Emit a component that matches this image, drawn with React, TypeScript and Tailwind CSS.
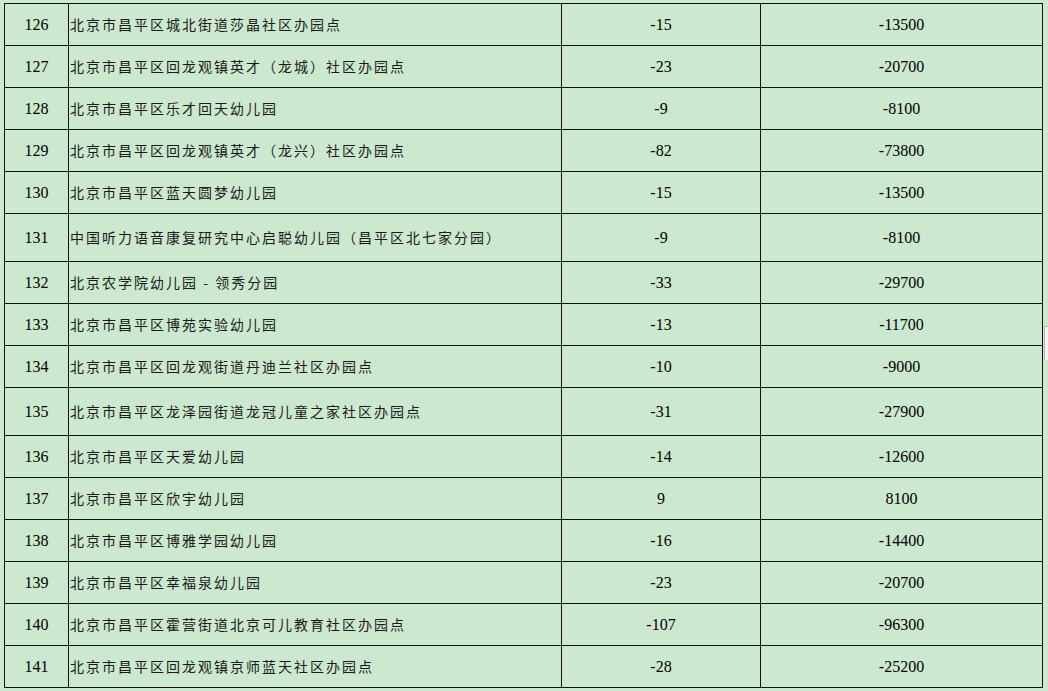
import React from "react";

type Row = { no: number; name: string; count: string; amount: string; tall?: boolean };

const ROWS: Row[] = [
  { no: 126, name: "北京市昌平区城北街道莎晶社区办园点", count: "-15", amount: "-13500" },
  { no: 127, name: "北京市昌平区回龙观镇英才（龙城）社区办园点", count: "-23", amount: "-20700" },
  { no: 128, name: "北京市昌平区乐才回天幼儿园", count: "-9", amount: "-8100" },
  { no: 129, name: "北京市昌平区回龙观镇英才（龙兴）社区办园点", count: "-82", amount: "-73800" },
  { no: 130, name: "北京市昌平区蓝天圆梦幼儿园", count: "-15", amount: "-13500" },
  { no: 131, name: "中国听力语音康复研究中心启聪幼儿园（昌平区北七家分园）", count: "-9", amount: "-8100", tall: true },
  { no: 132, name: "北京农学院幼儿园 - 领秀分园", count: "-33", amount: "-29700" },
  { no: 133, name: "北京市昌平区博苑实验幼儿园", count: "-13", amount: "-11700" },
  { no: 134, name: "北京市昌平区回龙观街道丹迪兰社区办园点", count: "-10", amount: "-9000" },
  { no: 135, name: "北京市昌平区龙泽园街道龙冠儿童之家社区办园点", count: "-31", amount: "-27900", tall: true },
  { no: 136, name: "北京市昌平区天爱幼儿园", count: "-14", amount: "-12600" },
  { no: 137, name: "北京市昌平区欣宇幼儿园", count: "9", amount: "8100" },
  { no: 138, name: "北京市昌平区博雅学园幼儿园", count: "-16", amount: "-14400" },
  { no: 139, name: "北京市昌平区幸福泉幼儿园", count: "-23", amount: "-20700" },
  { no: 140, name: "北京市昌平区霍营街道北京可儿教育社区办园点", count: "-107", amount: "-96300" },
  { no: 141, name: "北京市昌平区回龙观镇京师蓝天社区办园点", count: "-28", amount: "-25200" },
];

const serif = "font-['Liberation_Serif','Times_New_Roman',serif]";

export default function App() {
  return (
    <div className="relative min-h-screen w-full bg-[#cce8cf] pt-[3px] pl-[4px] overflow-hidden">
      <div className="w-[1039px] border-l border-t border-[#111]">
        {ROWS.map((r) => (
          <div
            key={r.no}
            className={`flex ${r.tall ? "h-[48px]" : "h-[42px]"}`}
          >
            <div
              className={`w-[64px] shrink-0 flex items-center justify-center border-r border-b border-[#111] text-[16px] text-black ${serif}`}
            >
              {r.no}
            </div>
            <div className="w-[493px] shrink-0 flex items-center pl-[1px] border-r border-b border-[#111] text-[14px] tracking-[2px] text-[#1a1a1a] font-['Noto_Sans_CJK_SC','Noto_Sans',sans-serif] whitespace-nowrap">
              {r.name}
            </div>
            <div
              className={`w-[199px] shrink-0 flex items-center justify-center border-r border-b border-[#111] text-[16px] text-black ${serif}`}
            >
              {r.count}
            </div>
            <div
              className={`w-[282px] shrink-0 flex items-center justify-center border-r border-b border-[#111] text-[16px] text-black ${serif}`}
            >
              {r.amount}
            </div>
          </div>
        ))}
      </div>

      {/* small grey tab at right edge */}
      <div className="absolute left-[1044px] top-[326px] w-[10px] h-[34px] bg-[#f4f4f4] border-t border-l border-[#b5b5b5]" />
    </div>
  );
}
